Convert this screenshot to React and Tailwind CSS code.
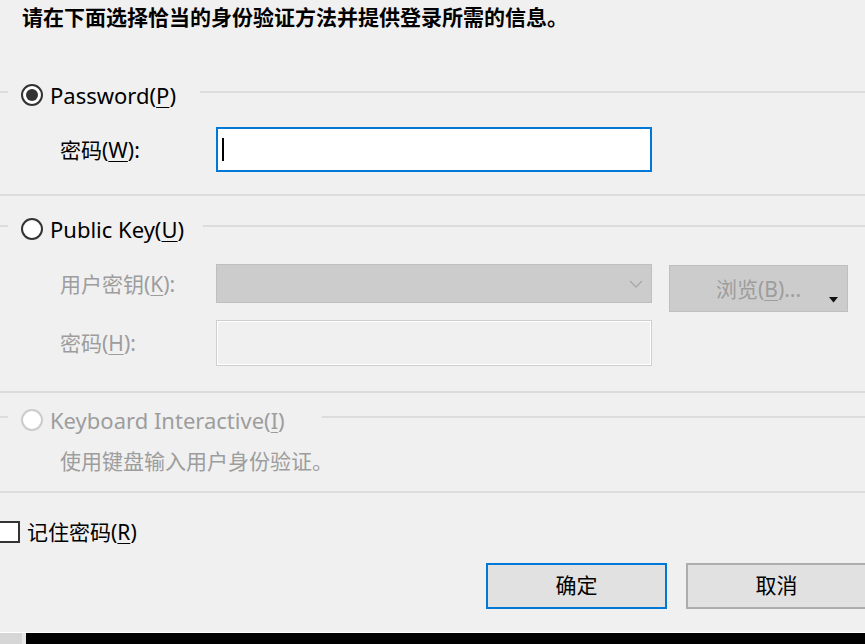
import React from "react";

const FONT = { fontFamily: '"Noto Sans", "Noto Sans CJK SC", sans-serif' };

function Mnemonic({ children }) {
  return <span className="underline decoration-1 underline-offset-[3px]">{children}</span>;
}

function Radio({ checked, disabled }) {
  if (disabled) {
    return <span className="block w-[22px] h-[22px] rounded-full border-2 border-[#cccccc] bg-white shrink-0" />;
  }
  return (
    <span className="flex items-center justify-center w-[22px] h-[22px] rounded-full border-2 border-[#333333] bg-white shrink-0">
      {checked && <span className="block w-[12px] h-[12px] rounded-full bg-[#333333]" />}
    </span>
  );
}

// group box header: short left edge, radio legend, rule to the right
function Legend({ checked, disabled, width, children }) {
  return (
    <div className="flex items-start h-[30px]">
      <div className="w-[8px] h-[2px] mt-[11px] bg-[#dcdcdc]" />
      <div className={`flex items-center h-[30px] pl-[13px] gap-[7px] shrink-0 ${width}`}>
        <Radio checked={checked} disabled={disabled} />
        <span className={`text-[22px] leading-[30px] ${disabled ? "text-[#9d9d9d]" : "text-black"}`}>
          {children}
        </span>
      </div>
      <div className="flex-1 h-[2px] mt-[11px] bg-[#dcdcdc]" />
    </div>
  );
}

function Rule() {
  return <div className="h-[2px] bg-[#dcdcdc]" />;
}

export default function App() {
  return (
    <div style={FONT} className="w-[865px] h-[644px] bg-[#f0f0f0] overflow-hidden flex flex-col">
      <div className="pl-[22px] pt-[3px] text-[21px] leading-[28px] font-bold text-black whitespace-nowrap">
        请在下面选择恰当的身份验证方法并提供登录所需的信息。
      </div>

      {/* Password */}
      <div className="mt-[49px]">
        <Legend checked width="w-[192px]">
          Password(<Mnemonic>P</Mnemonic>)
        </Legend>
        <div className="flex items-center pl-[60px] mt-[17px]">
          <span className="w-[156px] text-[21px] leading-[28px] text-black">
            密码(<Mnemonic>W</Mnemonic>):
          </span>
          <div className="w-[436px] h-[45px] bg-white border-2 border-[#0078d7] flex items-center pl-[4px]">
            <span className="block w-[2px] h-[23px] bg-black" />
          </div>
        </div>
        <div className="mt-[22px]">
          <Rule />
        </div>
      </div>

      {/* Public Key */}
      <div className="mt-[18px]">
        <Legend width="w-[195px]">
          Public Key(<Mnemonic>U</Mnemonic>)
        </Legend>
        <div className="flex items-start pl-[60px] mt-[20px]">
          <span className="w-[156px] h-[39px] flex items-center text-[21px] leading-[28px] text-[#9d9d9d]">
            用户密钥(<Mnemonic>K</Mnemonic>):
          </span>
          <div className="w-[436px] h-[39px] bg-[#cccccc] border border-[#bfbfbf] flex items-center justify-end pr-[8px]">
            <svg width="14" height="8" viewBox="0 0 14 8" fill="none">
              <path d="M1 1l6 6 6-6" stroke="#a8a8a8" strokeWidth="1.3" />
            </svg>
          </div>
          <div className="relative ml-[17px] mt-[1px] w-[179px] h-[47px] bg-[#cccccc] border border-[#bfbfbf] flex items-center justify-center text-[21px] leading-[28px] text-[#9d9d9d]">
            浏览(<Mnemonic>B</Mnemonic>)...
            <svg className="absolute right-[9px] top-[31px]" width="9" height="6" viewBox="0 0 9 6">
              <path d="M0 0h9L4.5 5.5z" fill="#111111" />
            </svg>
          </div>
        </div>
        <div className="flex items-center pl-[60px] mt-[8px]">
          <span className="w-[156px] text-[21px] leading-[28px] text-[#9d9d9d]">
            密码(<Mnemonic>H</Mnemonic>):
          </span>
          <div className="w-[436px] h-[46px] bg-[#f0f0f0] border border-[#cfcfcf] shadow-[inset_0_0_0_1px_#ffffff]" />
        </div>
        <div className="mt-[25px]">
          <Rule />
        </div>
      </div>

      {/* Keyboard Interactive */}
      <div className="mt-[12px]">
        <Legend disabled width="w-[314px]">
          Keyboard Interactive(<Mnemonic>I</Mnemonic>)
        </Legend>
        <div className="pl-[60px] mt-[12px] text-[21px] leading-[28px] text-[#9d9d9d]">
          使用键盘输入用户身份验证。
        </div>
        <div className="mt-[16px]">
          <Rule />
        </div>
      </div>

      {/* remember password */}
      <div className="flex items-center gap-[7px] mt-[25px] h-[28px]">
        <span className="block -ml-[2px] w-[22px] h-[22px] border-2 border-[#333333] bg-white shrink-0" />
        <span className="text-[21px] leading-[28px] text-black">
          记住密码(<Mnemonic>R</Mnemonic>)
        </span>
      </div>

      <div className="flex gap-[19px] pl-[486px] mt-[17px]">
        <button className="shrink-0 w-[181px] h-[46px] bg-[#e1e1e1] border-2 border-[#0078d7] text-[21px] text-black">
          确定
        </button>
        <button className="shrink-0 w-[181px] h-[46px] bg-[#e1e1e1] border-2 border-[#adadad] text-[21px] text-black">
          取消
        </button>
      </div>

      {/* taskbar strip below the dialog */}
      <div className="mt-auto flex flex-col">
        <div className="h-[1px] bg-white" />
        <div className="flex h-[11px]">
          <div className="w-[22px] bg-[#d6d6d6]" />
          <div className="w-[4px] bg-[#e8e8e8]" />
          <div className="flex-1 bg-black" />
        </div>
      </div>
    </div>
  );
}
